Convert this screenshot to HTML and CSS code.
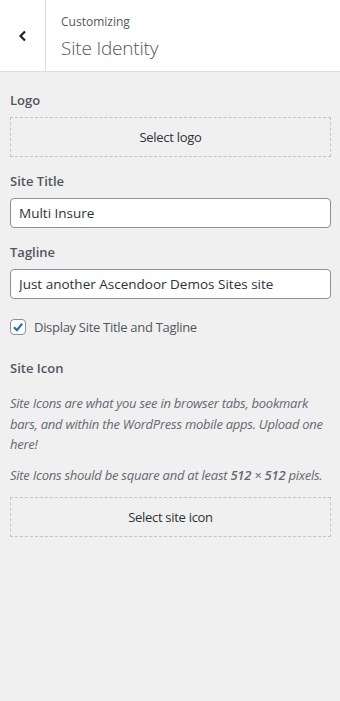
FILE: index.html
```html
<!DOCTYPE html>
<html lang="en">
<head>
    <meta charset="UTF-8">
    <meta name="viewport" content="width=device-width, initial-scale=1.0">
    <title>Site Identity</title>
    <link rel="stylesheet" href="styles.css">
</head>
<body>
    <div class="panel-header">
        <button class="back-button" aria-label="Back">
            <svg width="12" height="12" viewBox="0 0 12 12">
                <path d="M8 1.5 L3.5 6 L8 10.5" fill="none" stroke="#1d2327" stroke-width="2.2"/>
            </svg>
        </button>
        <div class="panel-title">
            <span class="crumb">Customizing</span>
            <h2>Site Identity</h2>
        </div>
    </div>

    <div class="panel-body">
        <div class="control">
            <span class="control-title">Logo</span>
            <button class="upload-button">Select logo</button>
        </div>

        <div class="control">
            <label class="control-title" for="blogname">Site Title</label>
            <input type="text" id="blogname" value="Multi Insure">
        </div>

        <div class="control">
            <label class="control-title" for="blogdescription">Tagline</label>
            <input type="text" id="blogdescription" value="Just another Ascendoor Demos Sites site">
        </div>

        <div class="control control-checkbox">
            <span class="checkbox">
                <svg width="14" height="14" viewBox="0 0 14 14">
                    <path d="M3 7.2 L6 10.2 L11.2 3.6" fill="none" stroke="#2271b1" stroke-width="2.2"/>
                </svg>
            </span>
            <label>Display Site Title and Tagline</label>
        </div>

        <div class="control">
            <span class="control-title">Site Icon</span>
            <p class="description first">Site Icons are what you see in browser tabs, bookmark bars, and within the WordPress mobile apps. Upload one here!</p>
            <p class="description last">Site Icons should be square and at least <strong>512</strong> × <strong>512</strong> pixels.</p>
            <button class="upload-button">Select site icon</button>
        </div>
    </div>
</body>
</html>
```

FILE: styles.css
```css
body {
    margin: 0;
    background-color: #f0f0f1;
    font-family: "Open Sans", sans-serif;
    color: #50575e;
}

.panel-header {
    display: flex;
    height: 71px;
    background-color: #fff;
    border-bottom: 1px solid #dcdcde;
}

.back-button {
    width: 46px;
    padding: 0;
    border: none;
    border-right: 1px solid #dcdcde;
    background: #fff;
    display: flex;
    align-items: center;
    justify-content: center;
}

.panel-title {
    padding: 13px 0 0 15px;
}

.crumb {
    display: block;
    font-size: 12px;
    line-height: 18px;
    color: #50575e;
}

.panel-title h2 {
    margin: 4px 0 0;
    font-size: 19px;
    font-weight: 300;
    line-height: 26px;
    letter-spacing: -0.2px;
    color: #50575e;
}

.panel-body {
    padding: 19px 9px 0 10px;
}

.control {
    margin-bottom: 15px;
}

.control-title {
    display: block;
    font-size: 13px;
    font-weight: 600;
    line-height: 18px;
    margin-bottom: 8px;
    color: #50575e;
}

.upload-button {
    display: block;
    width: 100%;
    height: 40px;
    border: 1px dashed #c3c4c7;
    background: transparent;
    font-family: "Open Sans", sans-serif;
    font-size: 13px;
    letter-spacing: -0.3px;
    color: #2c3338;
}

input[type="text"] {
    box-sizing: border-box;
    width: 100%;
    height: 30px;
    padding: 0 8px;
    border: 1px solid #8c8f94;
    border-radius: 4px;
    background: #fff;
    font-family: "Open Sans", sans-serif;
    font-size: 13.5px;
    color: #2c3338;
}

.control-checkbox {
    display: flex;
    align-items: center;
    gap: 8px;
    margin-top: 19px;
    margin-bottom: 23px;
}

.checkbox {
    box-sizing: border-box;
    width: 16px;
    height: 16px;
    border: 1px solid #8c8f94;
    border-radius: 4px;
    background: #fff;
    display: flex;
    align-items: center;
    justify-content: center;
}

.control-checkbox label {
    font-size: 13px;
    letter-spacing: -0.3px;
    color: #50575e;
}

.description {
    margin: 0 0 10px;
    font-size: 13px;
    font-style: italic;
    line-height: 20.5px;
    letter-spacing: -0.25px;
    color: #646970;
}

.description.first {
    margin-top: 16px;
}

.description.last {
    margin-bottom: 12px;
}

.description strong {
    font-weight: 600;
}
```
